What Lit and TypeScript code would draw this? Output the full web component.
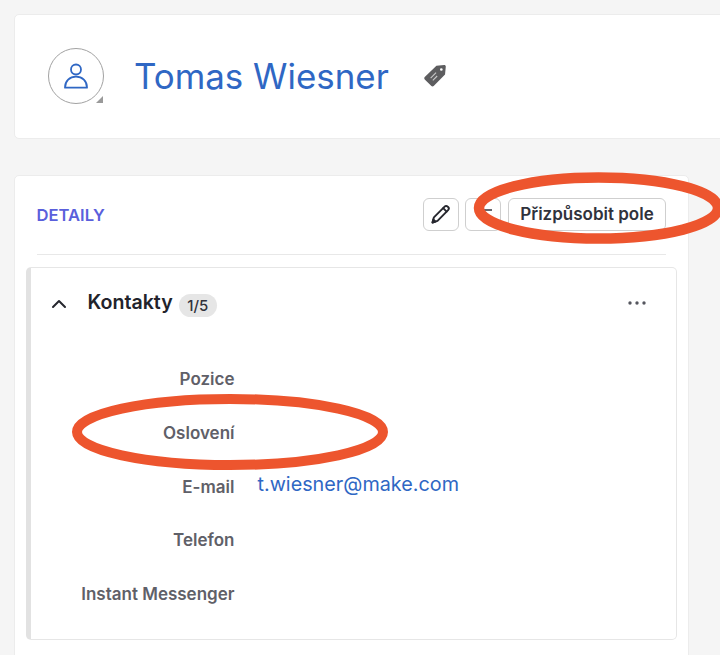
import { LitElement, html, css } from "lit";
import { customElement } from "lit/decorators.js";

@customElement("app-root")
export class AppRoot extends LitElement {
  static styles = css`
    :host {
      display: block;
      position: relative;
      width: 720px;
      height: 655px;
      overflow: hidden;
      background: #f5f5f5;
      font-family: Inter, "Liberation Sans", sans-serif;
      color: #22232b;
      -webkit-font-smoothing: antialiased;
    }
    .page {
      padding: 13.5px 0 0 13.5px;
      display: flex;
      flex-direction: column;
      gap: 36.5px;
    }
    .head {
      height: 125px;
      box-sizing: border-box;
      margin-right: -20px;
      background: #fff;
      border: 1px solid #ececec;
      border-radius: 5px;
      display: flex;
      align-items: center;
      padding: 0 0 0 33.5px;
    }
    .avatar {
      position: relative;
      width: 56px;
      height: 56px;
      box-sizing: border-box;
      border: 1.5px solid #a2a2a2;
      border-radius: 50%;
      display: flex;
      align-items: center;
      justify-content: center;
      flex: none;
    }
    .corner {
      position: absolute;
      right: 0;
      bottom: 0;
    }
    .name {
      margin-left: 30px;
      font-size: 34.9px;
      line-height: 40px;
      color: #2f67c4;
      font-weight: 400;
    }
    .tag {
      margin-left: 34px;
      display: flex;
    }
    .card {
      width: 675.5px;
      height: 500px;
      box-sizing: border-box;
      background: #fff;
      border: 1px solid #ececec;
      border-radius: 5px;
      padding: 0 11px;
    }
    .bar {
      margin: 0 11px;
      height: 79px;
      box-sizing: border-box;
      border-bottom: 1px solid #e8e8e8;
      display: flex;
      align-items: center;
      justify-content: space-between;
      padding: 0 0 2px 0;
    }
    .detail {
      margin-top: 2px;
      font-size: 16.6px;
      font-weight: 600;
      color: #5a5fdc;
    }
    .actions {
      display: flex;
      gap: 6px;
    }
    .btn {
      height: 33px;
      width: 36px;
      box-sizing: border-box;
      border: 1.5px solid #cfcfcf;
      border-radius: 6px;
      background: #fff;
      display: flex;
      align-items: center;
      justify-content: center;
      font-family: inherit;
      font-size: 17px;
      font-weight: 600;
      color: #30323c;
      padding: 0;
    }
    .btn.text {
      width: 158px;
      margin-left: 1px;
    }
    .minus {
      margin: 0 0 8px 6px;
    }
    .panel {
      margin-top: 12px;
      height: 373px;
      box-sizing: border-box;
      border: 1px solid #e6e6e6;
      border-left: 5px solid #e2e2e2;
      border-radius: 5px;
      display: flex;
      flex-direction: column;
    }
    .ph {
      height: 72px;
      display: flex;
      align-items: center;
      padding: 0 30px 0 20px;
    }
    .ph svg.chev {
      flex: none;
    }
    .ph h3 {
      margin: -4px 0 0 21px;
      font-size: 19.6px;
      font-weight: 600;
      color: #22232b;
    }
    .badge {
      margin: 2px 0 0 6px;
      height: 23px;
      width: 38px;
      justify-content: center;
      border-radius: 12px;
      background: #e6e6e6;
      font-size: 15px;
      font-weight: 500;
      display: flex;
      align-items: center;
      color: #30323c;
    }
    .more {
      margin: -2px 0 0 auto;
      display: flex;
    }
    .rows {
      display: grid;
      grid-template-columns: 204px 1fr;
      grid-auto-rows: 53.7px;
      column-gap: 23px;
      margin-top: 12.4px;
    }
    .label {
      justify-self: end;
      align-self: center;
      font-size: 17px;
      font-weight: 600;
      color: #5f6068;
    }
    .value {
      align-self: center;
      margin-top: -5px;
      font-size: 19.8px;
      color: #2f67c4;
    }
    .rings {
      position: absolute;
      left: 0;
      top: 0;
      pointer-events: none;
    }
    .rings ellipse {
      fill: none;
      stroke: #ed552e;
    }
    .rings .a {
      stroke-width: 10.5;
    }
    .rings .b {
      stroke-width: 10;
    }
  `;

  render() {
    return html`
      <div class="page">
        <section class="head">
          <div class="avatar">
            <svg width="26" height="28" viewBox="0 0 26 28" fill="none" stroke="#2f67c4" stroke-width="1.8">
              <circle cx="13" cy="7.5" r="5"></circle>
              <path d="M2 25.7c0-6.6 4.7-11 11-11s11 4.4 11 11z" stroke-linejoin="round"></path>
            </svg>
            <svg class="corner" width="7" height="7" viewBox="0 0 8 8"><path d="M8 0v8H0z" fill="#9a9a9a"></path></svg>
          </div>
          <div class="name">Tomas Wiesner</div>
          <div class="tag">
            <svg width="24" height="24" viewBox="0 0 22 22">
              <path d="M12.3 1.6l7.2-.6c.8 0 1.4.6 1.4 1.4l-.7 7.2-10.4 10.5c-.6.6-1.5.6-2.1 0l-6.1-6c-.6-.6-.6-1.5 0-2.1z" fill="#5d5d5f"></path>
              <circle cx="16.8" cy="5" r="1.2" fill="#fff"></circle>
              <path d="M7 13l5-5M9 15l4-4" stroke="#c9c9c9" stroke-width="1"></path>
            </svg>
          </div>
        </section>
        <section class="card">
          <div class="bar">
            <span class="detail">DETAILY</span>
            <div class="actions">
              <button class="btn">
                <svg width="20" height="20" viewBox="0 0 20 20" fill="none" stroke="#26272e" stroke-width="1.9" stroke-linejoin="round" stroke-linecap="round">
                  <path d="M1.5 18.5l1.4-5.2L13.6 2.6c.9-.9 2.2-.9 3.1 0l.4.4c.9.9.9 2.2 0 3.1L6.5 16.9z"></path>
                  <path d="M12.2 4.2l3.4 3.4"></path>
                  <path d="M1.5 18.5l.8-3 2.2 2.2z" fill="#26272e"></path>
                </svg>
              </button>
              <button class="btn">
                <svg class="minus" width="14" height="14" viewBox="0 0 14 14"><path d="M1 7h12" stroke="#40414a" stroke-width="1.6"></path></svg>
              </button>
              <button class="btn text">Přizpůsobit pole</button>
            </div>
          </div>
          <div class="panel">
            <div class="ph">
              <svg class="chev" width="16" height="10" viewBox="0 0 16 10" fill="none" stroke="#26272e" stroke-width="2" stroke-linecap="round" stroke-linejoin="round"><path d="M2 8l6-6 6 6"></path></svg>
              <h3>Kontakty</h3>
              <span class="badge">1/5</span>
              <span class="more">
                <svg width="18" height="4" viewBox="0 0 18 4" fill="#55565e"><circle cx="2" cy="2" r="1.7"></circle><circle cx="9" cy="2" r="1.7"></circle><circle cx="16" cy="2" r="1.7"></circle></svg>
              </span>
            </div>
            <div class="rows">
              <span class="label">Pozice</span><span></span>
              <span class="label">Oslovení</span><span></span>
              <span class="label">E-mail</span><span class="value">t.wiesner@make.com</span>
              <span class="label">Telefon</span><span></span>
              <span class="label">Instant Messenger</span><span></span>
            </div>
          </div>
        </section>
      </div>
      <svg class="rings" width="720" height="655" viewBox="0 0 720 655">
        <ellipse class="a" cx="598.5" cy="208" rx="119.5" ry="30.5"></ellipse>
        <ellipse class="b" cx="230" cy="432" rx="153" ry="33"></ellipse>
      </svg>
    `;
  }
}
